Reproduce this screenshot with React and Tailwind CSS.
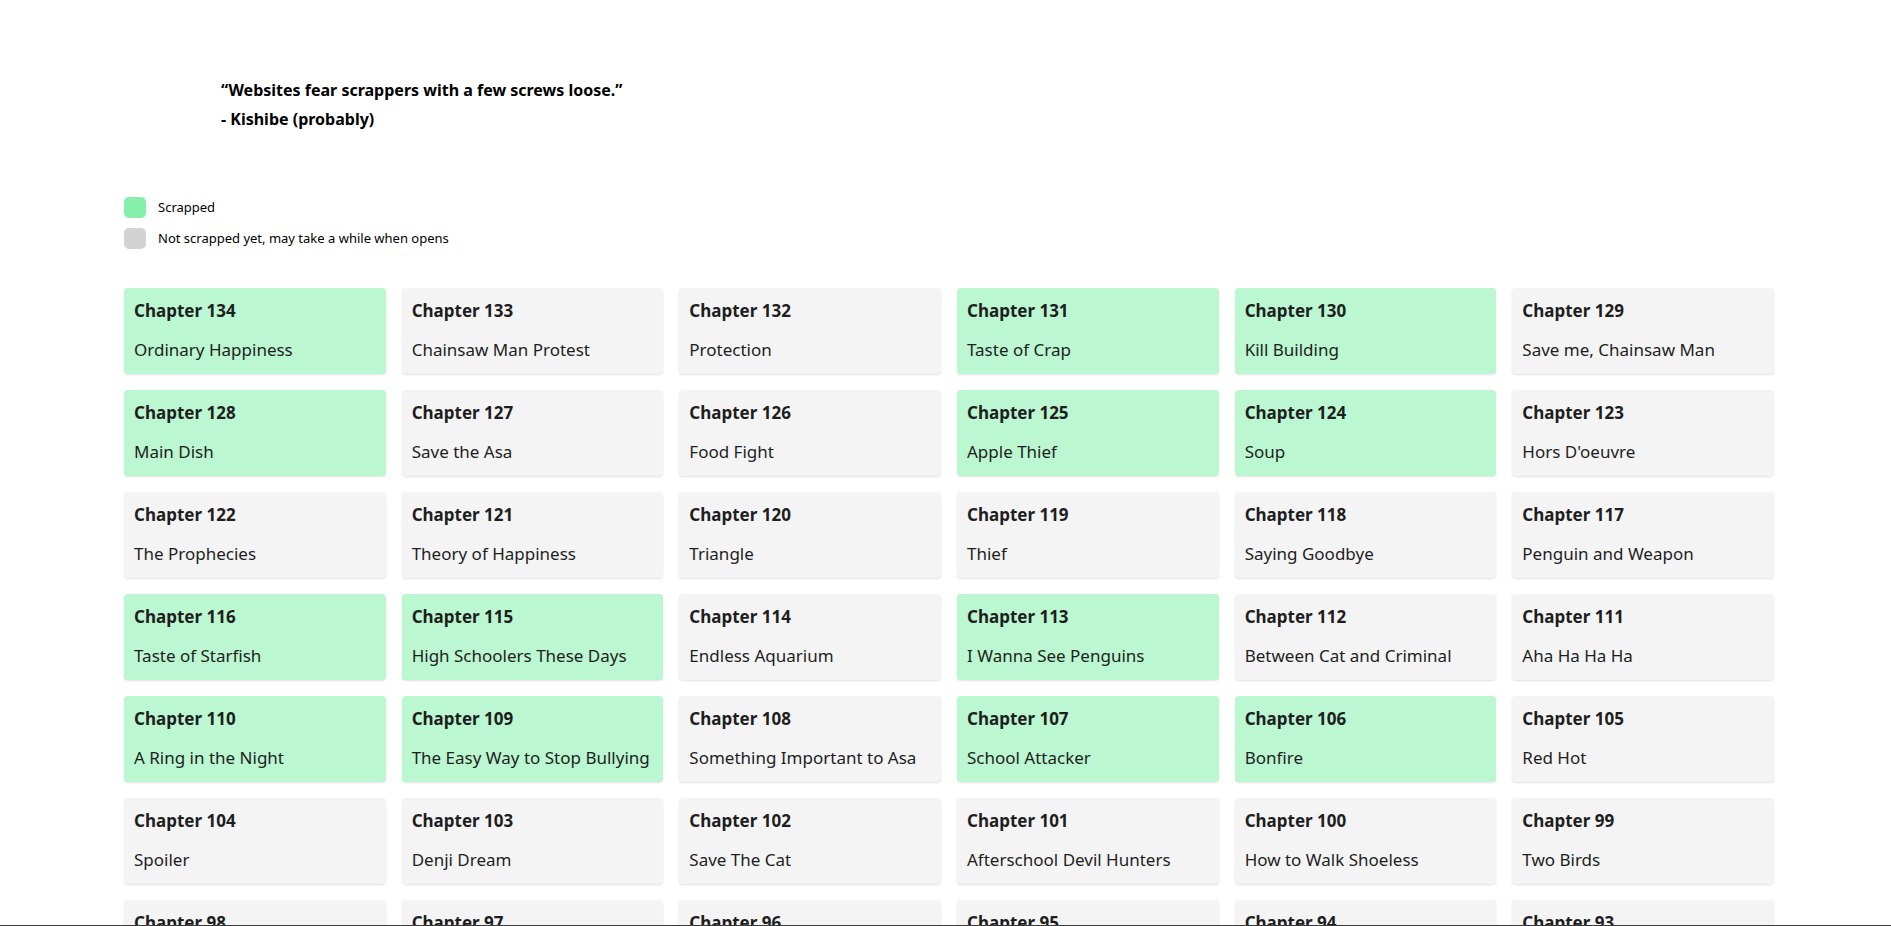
const chapters = [
    [134, 'Ordinary Happiness', true],
    [133, 'Chainsaw Man Protest', false],
    [132, 'Protection', false],
    [131, 'Taste of Crap', true],
    [130, 'Kill Building', true],
    [129, 'Save me, Chainsaw Man', false],
    [128, 'Main Dish', true],
    [127, 'Save the Asa', false],
    [126, 'Food Fight', false],
    [125, 'Apple Thief', true],
    [124, 'Soup', true],
    [123, "Hors D'oeuvre", false],
    [122, 'The Prophecies', false],
    [121, 'Theory of Happiness', false],
    [120, 'Triangle', false],
    [119, 'Thief', false],
    [118, 'Saying Goodbye', false],
    [117, 'Penguin and Weapon', false],
    [116, 'Taste of Starfish', true],
    [115, 'High Schoolers These Days', true],
    [114, 'Endless Aquarium', false],
    [113, 'I Wanna See Penguins', true],
    [112, 'Between Cat and Criminal', false],
    [111, 'Aha Ha Ha Ha', false],
    [110, 'A Ring in the Night', true],
    [109, 'The Easy Way to Stop Bullying', true],
    [108, 'Something Important to Asa', false],
    [107, 'School Attacker', true],
    [106, 'Bonfire', true],
    [105, 'Red Hot', false],
    [104, 'Spoiler', false],
    [103, 'Denji Dream', false],
    [102, 'Save The Cat', false],
    [101, 'Afterschool Devil Hunters', false],
    [100, 'How to Walk Shoeless', false],
    [99, 'Two Birds', false],
    [98, 'Tanaka Spine', false],
    [97, 'Love Chainsaw', false],
    [96, 'Chainsaw Man vs. Control Devil', false],
    [95, 'Super Showdown', false],
    [94, 'Hell Down', false],
    [93, 'Kiss', false],
]

function ChapterCard({ number, title, scrapped }) {
    return (
        <a
            href="#"
            className={
                scrapped
                    ? 'block h-[86px] rounded-[4px] bg-[#bbf7d0] px-[10px] pt-[10px] text-[#1e1e1e] shadow-[0_1px_2px_rgba(0,0,0,0.12)]'
                    : 'block h-[86px] rounded-[4px] bg-[#f4f4f4] px-[10px] pt-[10px] text-[#1e1e1e] shadow-[0_1px_2px_rgba(0,0,0,0.12)]'
            }
        >
            <div className="text-[17px] leading-[26px] font-bold">Chapter {number}</div>
            <div className="mt-[13px] text-[17px] leading-[26px]">{title}</div>
        </a>
    )
}

export default function App() {
    return (
        <div className="min-h-screen bg-white font-['Noto_Sans',sans-serif] text-black">
            <div className="pl-[124px]">
                <div className="pt-[76px] pl-[97px] text-[16px] leading-[29px] font-bold">
                    <p>“Websites fear scrappers with a few screws loose.”</p>
                    <p>- Kishibe (probably)</p>
                </div>

                <div className="mt-[63px] flex flex-col gap-[10px] text-[13px]">
                    <div className="flex items-center gap-[12px]">
                        <span className="h-[21px] w-[22px] rounded-[5px] bg-[#86efac]" />
                        <span>Scrapped</span>
                    </div>
                    <div className="flex items-center gap-[12px]">
                        <span className="h-[21px] w-[22px] rounded-[5px] bg-[#d3d3d3]" />
                        <span>Not scrapped yet, may take a while when opens</span>
                    </div>
                </div>

                <div className="mt-[39px] grid w-[1650px] grid-cols-6 gap-4 pb-10">
                    {chapters.map(([number, title, scrapped]) => (
                        <ChapterCard key={number} number={number} title={title} scrapped={scrapped} />
                    ))}
                </div>
            </div>
            <div className="fixed right-0 bottom-0 left-0 h-px bg-[#3a3a3a]" />
        </div>
    )
}
